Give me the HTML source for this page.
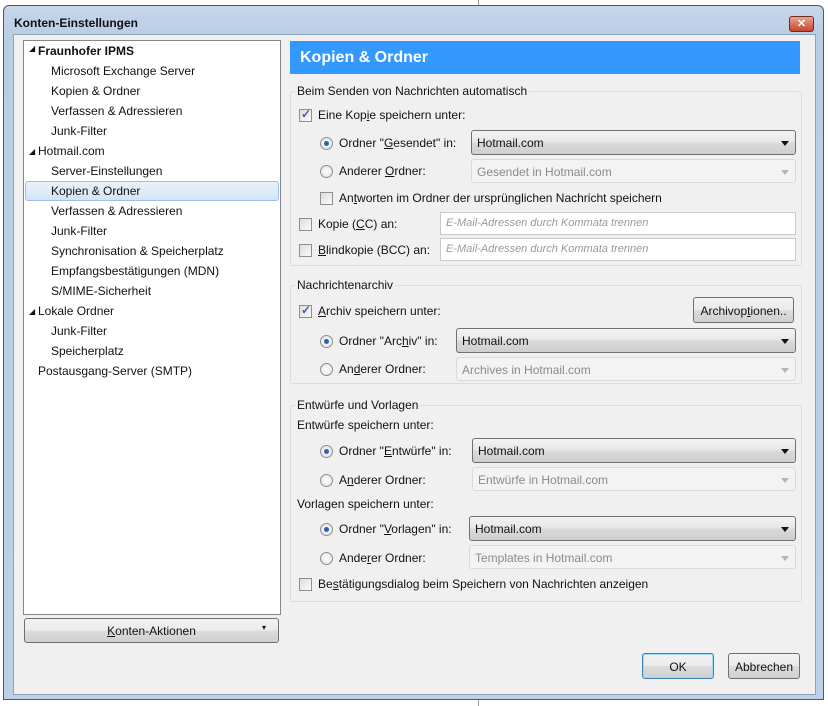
<!DOCTYPE html>
<html><head><meta charset="utf-8"><style>
*{box-sizing:border-box;margin:0;padding:0}
body{width:828px;height:706px;background:#fff;position:relative;overflow:hidden;font-family:"Liberation Sans",sans-serif;font-size:12px;color:#111}
.a{position:absolute;white-space:nowrap}
.win{position:absolute;left:3px;top:5px;width:821px;height:695px;border:1px solid #4a5a6c;border-radius:6px 6px 0 0;background:linear-gradient(#c6d6ea,#b9cde5 30px,#bcd0e8);}
.client{position:absolute;left:9px;top:28px;width:803px;height:661px;background:#f0f0f0;border:1px solid #8ea3bb}
.tree{position:absolute;left:23px;top:40px;width:258px;height:575px;background:#fff;border:1px solid #828790}
.sel{position:absolute;left:25px;top:181px;width:254px;height:20px;background:linear-gradient(#eaf2fb,#d4e4f6);border:1px solid #9cc0e8;border-radius:3px}
.btn{position:absolute;border:1px solid #707070;border-radius:3px;background:linear-gradient(#f2f2f2,#ebebeb 50%,#dddddd 50%,#cfcfcf);text-align:center}
.hdr{position:absolute;left:290px;top:41px;width:510px;height:33px;background:#3399ff;color:#fff;font-weight:bold;font-size:16px;padding:8px 0 0 10px}
.grp{position:absolute;border:1px solid #dcdcdc;border-radius:3px}
.lg{position:absolute;background:#f0f0f0;padding:0 2px}
.cb{position:absolute;width:13px;height:13px;border:1px solid #8f8f8f;background:linear-gradient(135deg,#ddd,#fafafa)}
.cb.on::after{content:"✓";position:absolute;left:1px;top:-3px;font-size:12px;color:#4a5fa8;font-weight:bold}
.rd{position:absolute;width:13px;height:13px;border:1px solid #8f8f8f;border-radius:50%;background:radial-gradient(#fff,#ddd)}
.rd.on::after{content:"";position:absolute;left:3px;top:3px;width:5px;height:5px;border-radius:50%;background:#2a62b4}
.dd{position:absolute;height:25px;border:1px solid #707070;border-radius:3px;background:linear-gradient(#f4f4f4,#e6e6e6 50%,#dadada 50%,#cfcfcf);padding:5px 0 0 5px;font-size:12px}
.dd::after{content:"";position:absolute;right:6px;top:10px;border:4px solid transparent;border-top:5px solid #111}
.ddd{position:absolute;height:24px;border:1px solid #d9d9d9;border-radius:3px;background:#f3f3f3;padding:5px 0 0 5px;color:#8a8a8a}
.ddd::after{content:"";position:absolute;right:6px;top:10px;border:4px solid transparent;border-top:5px solid #b5b5b5}
.tx{position:absolute;height:23px;border:1px solid #c9c9c9;background:#fff;padding:4px 0 0 5px;color:#999;font-style:italic;font-size:11px}
</style></head><body>
<div class="a" style="left:478px;top:0;width:1px;height:6px;background:#999"></div>
<div class="a" style="left:478px;top:700px;width:1px;height:6px;background:#999"></div>
<div class="win">
 <div class="a" style="left:10px;top:10px;font-weight:bold;font-size:12px">Konten-Einstellungen</div>
 <div class="a" style="left:785px;top:10px;width:25px;height:16px;border:1px solid #6d2c22;border-radius:3px;background:linear-gradient(#e9a493,#c7452c);color:#fff;font-size:11px;font-weight:bold;text-align:center;line-height:14px">✕</div>
 <div class="client"></div>
</div>
<div class="tree"></div>
<div class="sel"></div>
<div class="a" style="left:29px;top:44px;font-size:8px">◢</div><div class="a" style="left:38px;top:44px;font-weight:bold">Fraunhofer IPMS</div>
<div class="a" style="left:51px;top:64px">Microsoft Exchange Server</div>
<div class="a" style="left:51px;top:84px">Kopien &amp; Ordner</div>
<div class="a" style="left:51px;top:104px">Verfassen &amp; Adressieren</div>
<div class="a" style="left:51px;top:124px">Junk-Filter</div>
<div class="a" style="left:29px;top:147px;font-size:8px">◢</div><div class="a" style="left:38px;top:144px">Hotmail.com</div>
<div class="a" style="left:51px;top:164px">Server-Einstellungen</div>
<div class="a" style="left:51px;top:184px">Kopien &amp; Ordner</div>
<div class="a" style="left:51px;top:204px">Verfassen &amp; Adressieren</div>
<div class="a" style="left:51px;top:224px">Junk-Filter</div>
<div class="a" style="left:51px;top:244px">Synchronisation &amp; Speicherplatz</div>
<div class="a" style="left:51px;top:264px">Empfangsbestätigungen (MDN)</div>
<div class="a" style="left:51px;top:284px">S/MIME-Sicherheit</div>
<div class="a" style="left:29px;top:307px;font-size:8px">◢</div><div class="a" style="left:38px;top:304px">Lokale Ordner</div>
<div class="a" style="left:51px;top:324px">Junk-Filter</div>
<div class="a" style="left:51px;top:344px">Speicherplatz</div>
<div class="a" style="left:38px;top:364px">Postausgang-Server (SMTP)</div>
<div class="btn" style="left:24px;top:618px;width:255px;height:25px;padding-top:5px"><u>K</u>onten-Aktionen<span style="position:absolute;right:12px;top:4px;font-size:8px">▾</span></div>

<div class="hdr">Kopien &amp; Ordner</div>

<div class="grp" style="left:290px;top:91px;width:512px;height:175px"></div>
<div class="lg a" style="left:295px;top:84px">Beim Senden von Nachrichten automatisch</div>
<div class="cb on" style="left:299px;top:109px"></div><div class="a" style="left:318px;top:108px">Eine Kop<u>i</u>e speichern unter:</div>
<div class="rd on" style="left:320px;top:137px"></div><div class="a" style="left:339px;top:136px">Ordner "<u>G</u>esendet" in:</div>
<div class="dd" style="left:471px;top:130px;width:325px">Hotmail.com</div>
<div class="rd" style="left:320px;top:165px"></div><div class="a" style="left:339px;top:164px">Anderer <u>O</u>rdner:</div>
<div class="ddd" style="left:471px;top:159px;width:325px">Gesendet in Hotmail.com</div>
<div class="cb" style="left:320px;top:192px"></div><div class="a" style="left:339px;top:191px">An<u>t</u>worten im Ordner der ursprünglichen Nachricht speichern</div>
<div class="cb" style="left:299px;top:218px"></div><div class="a" style="left:318px;top:217px">Kopie (<u>C</u>C) an:</div>
<div class="tx" style="left:440px;top:212px;width:356px">E-Mail-Adressen durch Kommata trennen</div>
<div class="cb" style="left:299px;top:244px"></div><div class="a" style="left:318px;top:243px"><u>B</u>lindkopie (BCC) an:</div>
<div class="tx" style="left:440px;top:238px;width:356px">E-Mail-Adressen durch Kommata trennen</div>

<div class="grp" style="left:290px;top:285px;width:512px;height:99px"></div>
<div class="lg a" style="left:295px;top:278px">Nachrichtenarchiv</div>
<div class="cb on" style="left:299px;top:305px"></div><div class="a" style="left:318px;top:304px"><u>A</u>rchiv speichern unter:</div>
<div class="btn" style="left:693px;top:297px;width:101px;height:26px;padding-top:6px">Archivop<u>t</u>ionen..</div>
<div class="rd on" style="left:320px;top:335px"></div><div class="a" style="left:339px;top:334px">Ordner "Arc<u>h</u>iv" in:</div>
<div class="dd" style="left:456px;top:328px;width:340px">Hotmail.com</div>
<div class="rd" style="left:320px;top:363px"></div><div class="a" style="left:339px;top:362px">An<u>d</u>erer Ordner:</div>
<div class="ddd" style="left:456px;top:357px;width:340px">Archives in Hotmail.com</div>

<div class="grp" style="left:290px;top:405px;width:512px;height:197px"></div>
<div class="lg a" style="left:295px;top:398px">Entwürfe und Vorlagen</div>
<div class="a" style="left:297px;top:418px">Entwürfe speichern unter:</div>
<div class="rd on" style="left:320px;top:445px"></div><div class="a" style="left:339px;top:444px">Ordner "<u>E</u>ntwürfe" in:</div>
<div class="dd" style="left:472px;top:438px;width:324px">Hotmail.com</div>
<div class="rd" style="left:320px;top:474px"></div><div class="a" style="left:339px;top:473px">A<u>n</u>derer Ordner:</div>
<div class="ddd" style="left:472px;top:467px;width:324px">Entwürfe in Hotmail.com</div>
<div class="a" style="left:297px;top:497px">Vorlagen speichern unter:</div>
<div class="rd on" style="left:320px;top:523px"></div><div class="a" style="left:339px;top:522px">Ordner "<u>V</u>orlagen" in:</div>
<div class="dd" style="left:469px;top:516px;width:327px">Hotmail.com</div>
<div class="rd" style="left:320px;top:552px"></div><div class="a" style="left:339px;top:551px">Ande<u>r</u>er Ordner:</div>
<div class="ddd" style="left:469px;top:545px;width:327px">Templates in Hotmail.com</div>
<div class="cb" style="left:299px;top:578px"></div><div class="a" style="left:318px;top:577px">Be<u>s</u>tätigungsdialog beim Speichern von Nachrichten anzeigen</div>

<div class="btn" style="left:642px;top:653px;width:72px;height:26px;padding-top:6px;border-color:#3c7fb1;box-shadow:inset 0 0 0 1px #9fdcf7">OK</div>
<div class="btn" style="left:728px;top:653px;width:72px;height:26px;padding-top:6px">Abbrechen</div>
</body></html>
